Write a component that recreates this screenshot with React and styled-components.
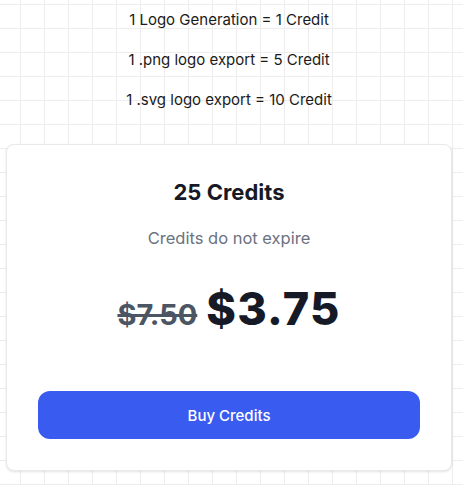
import React from "react";
import styled, { createGlobalStyle } from "styled-components";

const GlobalStyle = createGlobalStyle`
  html, body {
    margin: 0;
    padding: 0;
  }
  body {
    font-family: Inter, "Noto Sans", sans-serif;
    color: #111827;
    background-color: #ffffff;
    background-image:
      linear-gradient(to right, #ededed 1px, transparent 1px),
      linear-gradient(to bottom, #ededed 1px, transparent 1px);
    background-size: 24px 24px;
    background-position: 20px 4px;
    min-height: 485px;
  }
`;

const Page = styled.div`
  width: 446px;
  display: flex;
  flex-direction: column;
  padding: 10px 11px 0 6px;
`;

const Rules = styled.div`
  display: flex;
  flex-direction: column;
  align-items: center;
  gap: 20px;
  margin-bottom: 34px;
`;

const Rule = styled.p`
  margin: 0;
  font-size: 15px;
  line-height: 20px;
  color: #1a1a1a;
`;

const Card = styled.section`
  box-sizing: border-box;
  width: 100%;
  padding: 31px;
  background: #fff;
  border: 1px solid #e8e9ec;
  border-radius: 8px;
  box-shadow: 0 1px 3px rgba(0, 0, 0, 0.08), 0 1px 2px rgba(0, 0, 0, 0.04);
  display: flex;
  flex-direction: column;
  align-items: center;
`;

const Title = styled.h2`
  margin: 0;
  font-size: 22px;
  line-height: 32px;
  font-weight: 700;
  color: #161a26;
`;

const Subtitle = styled.p`
  margin: 16px 0 0;
  font-size: 16.5px;
  line-height: 28px;
  color: #6b7280;
`;

const PriceRow = styled.div`
  margin-top: 36px;
  display: flex;
  align-items: baseline;
  gap: 9px;
`;

const OldPrice = styled.span`
  font-size: 29px;
  font-weight: 700;
  color: #4b5563;
  text-decoration: line-through;
  text-decoration-thickness: 3px;
`;

const Price = styled.span`
  font-size: 45px;
  line-height: 42px;
  font-weight: 800;
  letter-spacing: 1.2px;
  color: #161a26;
`;

const BuyButton = styled.button`
  margin-top: 59px;
  width: 100%;
  height: 48px;
  border: none;
  border-radius: 12px;
  background: #3a5bef;
  color: #fff;
  font-family: inherit;
  font-size: 15px;
  font-weight: 500;
  cursor: pointer;
`;

const rules = [
  "1 Logo Generation = 1 Credit",
  "1 .png logo export = 5 Credit",
  "1 .svg logo export = 10 Credit",
];

export default function App() {
  return (
    <>
      <GlobalStyle />
      <Page>
        <Rules>
          {rules.map((r) => (
            <Rule key={r}>{r}</Rule>
          ))}
        </Rules>
        <Card>
          <Title>25 Credits</Title>
          <Subtitle>Credits do not expire</Subtitle>
          <PriceRow>
            <OldPrice>$7.50</OldPrice>
            <Price>$3.75</Price>
          </PriceRow>
          <BuyButton>Buy Credits</BuyButton>
        </Card>
      </Page>
    </>
  );
}
